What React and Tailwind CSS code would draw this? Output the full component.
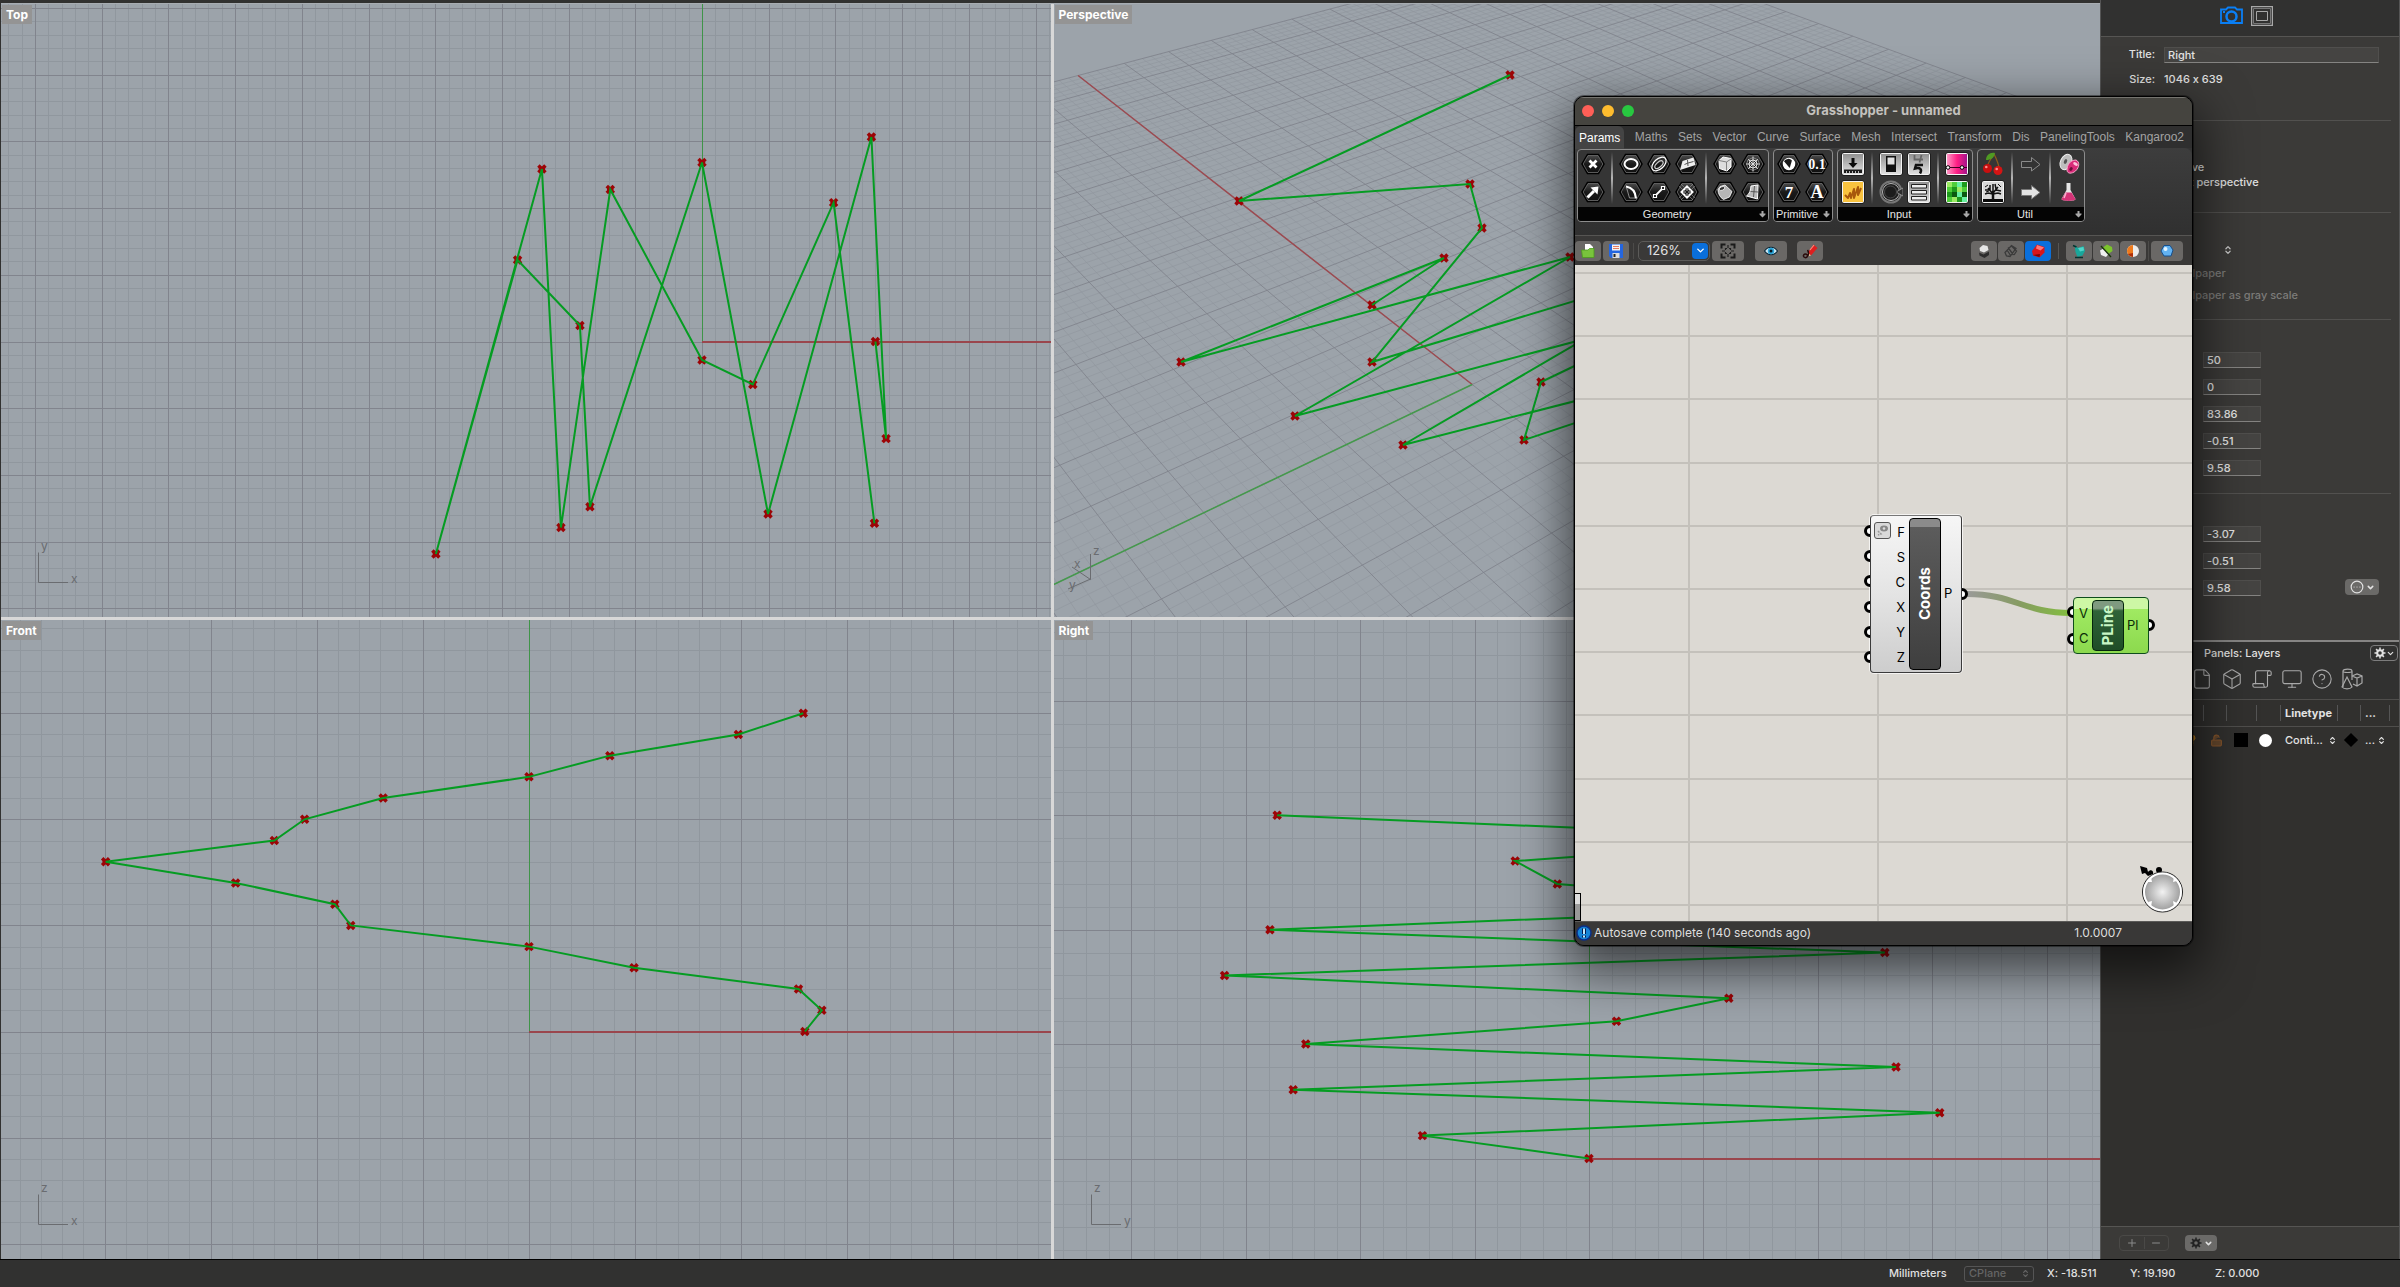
import React from "react";
import {
  File, Box, Scroll, Monitor, CircleHelp, ChevronDown, ChevronsUpDown,
  Plus, Minus, CircleEllipsis, Lightbulb, LockOpen,
} from "lucide-react";

/* ---------- curve data, in major grid units ---------- */
const CURVE = [
  [2.6, 0], [2.76, -1.456], [2.54, 3.066], [0.99, -2.586], [0, 2.684], [-1.68, -2.476],
  [-1.83, 0.24], [-2.765, 1.222], [-3.99, -3.186], [-2.4, 2.586], [-2.115, -2.789],
  [-1.375, 2.279], [0, -0.277], [0.762, -0.645], [1.973, 2.082], [2.585, -2.726],
].map(([x, y], i) => [x, y, i * 0.2]);

const MINOR = "#90979e";
const MAJOR = "#81848d";

function Curve({ points }) {
  return (
    <g>
      {points.map(([x, y], i) => (
        <path
          key={i}
          transform={`translate(${x} ${y})`}
          d="M-3.500 -3.500L3.500 3.500M3.500 -3.500L-3.500 3.500M-1.500 -1H1.500V1H-1.500Z"
          stroke="#9c0406"
          strokeWidth="3.500"
          fill="none"
        />
      ))}
      <polyline
        points={points.map((p) => p.join(",")).join(" ")}
        fill="none"
        stroke="#059c22"
        strokeWidth="2"
      />
    </g>
  );
}

function Viewport({ label, gizmo, children }) {
  return (
    <section className="relative min-w-0 overflow-hidden bg-[#9ca3aa]">
      <svg className="absolute inset-0 h-full w-full">{children}</svg>
      <h2 className="absolute top-px left-px bg-[#949494] px-1 text-[12px] leading-[19px] font-bold text-white">
        {label}
      </h2>
      {gizmo}
    </section>
  );
}

function AxisGizmo({ up, right }) {
  return (
    <svg className="absolute bottom-[29px] left-[32px]" width="54" height="50" stroke="#6a6c70" fill="none">
      <path d="M5.500 14.500V44.500H35" />
      <g fill="#6a6c70" stroke="none" fontSize="12">
        <text x="8" y="12">{up}</text>
        <text x="38" y="45">{right}</text>
      </g>
    </svg>
  );
}

function FlatView({ label, origin, unit, project, gizmo }) {
  const [ox, oy] = origin;
  const steps = Array.from({ length: 141 }, (_, i) => i - 70);
  const W = 14 * unit;
  const path = (list) =>
    list
      .map((i) => {
        const x = Math.round(ox + (i * unit) / 5);
        const y = Math.round(oy + (i * unit) / 5);
        return `M${x} ${oy - W}V${oy + W}M${ox - W} ${y}H${ox + W}`;
      })
      .join("");
  return (
    <Viewport label={label} gizmo={<AxisGizmo {...gizmo} />}>
      <g fill="none" shapeRendering="crispEdges">
        <path d={path(steps.filter((i) => i % 5))} stroke={MINOR} />
        <path d={path(steps.filter((i) => i % 5 === 0))} stroke={MAJOR} />
        <path d={`M${ox} ${oy}V-10`} stroke="#3f9448" />
        <path d={`M${ox} ${oy}H${ox + W}`} stroke="#9a464d" strokeWidth="2" />
      </g>
      <Curve points={CURVE.map((p) => project(p)).map(([u, v]) => [ox + u * unit, oy - v * unit])} />
    </Viewport>
  );
}

const PANE = [1053, 4];

const camera = ([x, y, z = 0]) => {
  const w = 1 + 0.0362 * x - 0.03053 * y - 0.024 * z;
  return [
    (1471.2 + 10.84 * x - 103.8 * y - 38.1 * z) / w - PANE[0],
    (384.5 - 19.34 * x + 16.4 * y - 67.9 * z) / w - PANE[1],
  ];
};

/* screen places of the curve's points in the perspective view; null where the camera gives them */
const PERSPECTIVE_POINTS = [
  [1371, 305], [1443, 258], [1180, 362], [1569, 257], [1294, 416], null, [1540, 382], [1523, 440],
  null, [1402, 445], null, [1371, 362], [1481, 228], [1469, 184], [1238, 201], [1509, 75],
];

function PerspectiveView() {
  const steps = Array.from({ length: 141 }, (_, i) => i - 70);
  const seg = (a, b) => {
    const p = camera(a);
    const q = camera(b);
    return `M${p[0].toFixed(1)} ${p[1].toFixed(1)}L${q[0].toFixed(1)} ${q[1].toFixed(1)}`;
  };
  const lines = (list) =>
    list.map((i) => seg([i / 5, -14], [i / 5, 14]) + seg([-14, i / 5], [14, i / 5])).join("");
  const points = PERSPECTIVE_POINTS.map((p, i) => (p ? [p[0] - PANE[0], p[1] - PANE[1]] : camera(CURVE[i])));
  return (
    <Viewport
      label="Perspective"
      gizmo={
        <svg className="absolute bottom-[22px] left-[10px]" width="54" height="56" stroke="#6a6c70" fill="none">
          <path d="M26.500 15V40.500L8 28M26.500 40L4 50" />
          <g fill="#6a6c70" stroke="none" fontSize="12">
            <text x="29" y="16">z</text>
            <text x="10" y="29">x</text>
            <text x="5" y="50">y</text>
          </g>
        </svg>
      }
    >
      <path d={lines(steps.filter((i) => i % 5))} stroke={MINOR} strokeOpacity="0.65" fill="none" />
      <path d={lines(steps.filter((i) => i % 5 === 0))} stroke={MAJOR} strokeOpacity="0.9" fill="none" />
      <path d={seg([0, 0], [14, 0])} stroke="#9c4a50" strokeWidth="1.500" />
      <path d={seg([0, 0], [0, 14])} stroke="#45994c" strokeWidth="1.500" />
      <Curve points={points} />
    </Viewport>
  );
}

/* ---------- ribbon icons ---------- */
function Hex({ children }) {
  return (
    <svg width="24" height="24" viewBox="0 0 24 24" className="block">
      <path d="M1 12L6.500 2.500H17.500L23 12L17.500 21.500H6.500Z" fill="#0b0b0b" stroke="#000" strokeWidth="1.500" />
      <path d="M2.200 12L7 3.500H17L21.800 12L17 20.500H7Z" fill="url(#hexShade)" stroke="#6f6f6f" strokeWidth="0.800" />
      <g fill="none" stroke="#fff" strokeWidth="1.500">{children}</g>
    </svg>
  );
}

function Plate({ fill = "url(#plateShade)", children }) {
  return (
    <svg width="24" height="24" viewBox="0 0 24 24" className="block">
      <rect x="0.500" y="0.500" width="23" height="23" rx="2" fill="#080808" />
      <rect x="1.500" y="1.500" width="21" height="21" rx="1" fill={fill} stroke="#f4f4f4" />
      {children}
    </svg>
  );
}

const Glyph = ({ size, y, x = 12, children }) => (
  <text x={x} y={y} fontSize={size} textAnchor="middle" fill="#fff" stroke="none" fontWeight="bold" className="font-['Liberation_Serif',serif]">
    {children}
  </text>
);

const I = {
  point: <Hex><path d="M8.500 8.500L15.500 15.500M15.500 8.500L8.500 15.500" strokeWidth="2.800" /></Hex>,
  vector: <Hex><path d="M6.500 17.500L13 11" strokeWidth="3" /><path d="M9.500 7.500L17.500 6.500L16.500 14.500Z" fill="#fff" stroke="none" /></Hex>,
  circle: <Hex><ellipse cx="12" cy="12" rx="6.500" ry="5" strokeWidth="2" /></Hex>,
  arc: <Hex><path d="M7 6.500C13 7.500 16.500 11.500 17 18.500" strokeWidth="2.200" /><path d="M7.500 7.500L10.500 18L16 18" strokeWidth="0.700" stroke="#bbb" /></Hex>,
  curve: <Hex><ellipse cx="12" cy="12" rx="8.500" ry="5" transform="rotate(-42 12 12)" strokeWidth="1.300" /><ellipse cx="11.500" cy="12.500" rx="5" ry="2.500" transform="rotate(-42 12 12)" strokeWidth="1.200" stroke="#ccc" /></Hex>,
  line: <Hex><path d="M8 16L16 8" strokeWidth="1.800" /><path d="M6.500 14.500h3v3h-3zM14.500 6.500h3v3h-3z" fill="#111" strokeWidth="1.200" /></Hex>,
  plane: <Hex><path d="M7.500 9L18.500 5.500L20.500 13L5 18Z" fill="#eee" stroke="none" /><path d="M9.500 12.500L13 11M12.500 8L13 14M13 11L18.500 9.500" stroke="#555" strokeWidth="1" /></Hex>,
  rect: <Hex><path d="M12 6.500L17.500 12L12 17.500L6.500 12Z" strokeWidth="2" /><path d="M6 4L20 18M18 4L4 18M4 6L18 20M20 6L6 20" stroke="#999" strokeWidth="0.600" /></Hex>,
  box: <Hex><path d="M6 8.500L10 5L18 6.500V15L14 19L6.500 16.500Z" fill="#ddd" stroke="#fff" strokeWidth="1" /><path d="M6 8.500L13.500 10V18.500M13.500 10L18 7" stroke="#777" strokeWidth="0.900" /></Hex>,
  brep: <Hex><path d="M7 6.500L12 5L19 11.500L16.500 17L10.500 19.500C7 17.500 5 13.500 5 9.500Z" fill="#b5b5b5" strokeWidth="0.800" /><ellipse cx="9" cy="8.500" rx="2.800" ry="1.700" fill="#333" stroke="#eee" strokeWidth="0.800" transform="rotate(-25 9 8.500)" /></Hex>,
  mesh: <Hex><circle cx="12" cy="12" r="4" strokeWidth="0.900" /><path d="M12 4.500V19.500M5 12H19M7 7L17 17M17 7L7 17" strokeWidth="1" stroke="#ddd" /><path d="M7 8L12 5.500L17 8L18.500 12L17 16L12 18.500L7 16L5.500 12Z" strokeWidth="0.700" stroke="#aaa" /></Hex>,
  surface: <Hex><path d="M10 6L17 5L16.500 19L5.500 16C9 13.500 9.500 10 10 6Z" fill="#bbb" strokeWidth="1" /><path d="M13.500 6L12.500 17M9.500 11.500L17 12" stroke="#444" strokeWidth="0.800" /></Hex>,
  bool: <Hex><circle cx="12" cy="12" r="5.500" fill="#fff" stroke="#fff" /><path d="M8 12L15.500 7.500A5 5 0 0 1 15 15.500Z" transform="rotate(-100 12 12)" fill="#1a1a1a" stroke="none" /></Hex>,
  number: <Hex><Glyph size="14" y="17">0.1</Glyph></Hex>,
  int: <Hex><Glyph size="17" y="18">7</Glyph></Hex>,
  text: <Hex><Glyph size="18" y="18">A</Glyph></Hex>,
  slider: <Plate><path d="M10.500 6h3v5h3L12 16L7.500 11h3z" fill="#0a0a0a" /><path d="M3 17.500H21V21H3Z" fill="#1c1c1c" /><path d="M5.500 21v-2M8.500 21v-2M11.500 21v-2M14.500 21v-2M17.500 21v-2" stroke="#bbb" /></Plate>,
  graph: <Plate fill="#f9c33f"><path d="M4 15L7 18L9 13L10 18L13 9L13 18L17 7L17 15L20 8" fill="none" stroke="#a8580c" strokeWidth="2" strokeLinejoin="round" /></Plate>,
  toggle: <Plate><rect x="7" y="4" width="10" height="16" fill="#111" /><rect x="8.500" y="5.500" width="7" height="7" fill="#e0e0e0" /></Plate>,
  knob: (
    <svg width="24" height="24" viewBox="0 0 24 24" className="block">
      <circle cx="12" cy="12" r="10.500" fill="#1d1d1d" stroke="#777" strokeWidth="2" />
      <circle cx="12" cy="12" r="8.500" fill="none" stroke="#b5b5b5" />
      <path d="M24 8L17 12L24 16Z" fill="#2c2c2c" stroke="#999" strokeWidth="0.800" />
      <circle cx="11.500" cy="12" r="6" fill="#1c1c1c" stroke="#4a4a4a" />
    </svg>
  ),
  digits: <Plate><path d="M7.500 3V7.500H16M14.500 3L12.500 10.500" fill="none" stroke="#666" strokeWidth="1.800" /><path d="M16 13H9L8 16.500C13 15 15.500 17.500 13 21.500" fill="none" stroke="#111" strokeWidth="2.500" /></Plate>,
  list: <Plate><path d="M4.500 4.500h15v3.500h-15zM4.500 10.500h15v3.500h-15zM4.500 16.500h15v3.500h-15z" fill="#eee" stroke="#222" /></Plate>,
  gradient: <Plate fill="url(#pinkShade)"><path d="M2 15.500H22" stroke="#400020" /><circle cx="3" cy="15.500" r="1.800" fill="#fff" stroke="#000" /><circle cx="17" cy="15.500" r="1.800" fill="#fff" stroke="#000" /></Plate>,
  swatch: (
    <Plate fill="#4fce3a">
      <path d="M2 2h5v5h-5zM12 7h5v5h-5zM7 17h5v5h-5z" fill="#9bea62" />
      <path d="M7 7h5v5h-5zM17 2h5v5h-5zM2 12h5v5h-5zM12 17h5v5h-5z" fill="#1e9a1c" />
      <path d="M7 12h5v5h-5zM17 12h5v5h-5z" fill="#0c5a10" />
      <path d="M12 2h5v5h-5zM17 17h5v5h-5zM12 12h5v5h-5z" fill="#66f0a0" />
    </Plate>
  ),
  cherry: (
    <svg width="24" height="24" viewBox="0 0 24 24" className="block">
      <path d="M13 2C9 8 7 11 6 15M13 2C16 8 17.500 11 18 16" stroke="#8c5a1c" strokeWidth="1.300" fill="none" />
      <path d="M14 1C9 0 5 3 5 8C10 8 13 6 14 1Z" fill="#4f9a22" />
      <circle cx="6.500" cy="16.500" r="4.500" fill="#c90f0f" /><circle cx="17" cy="18.500" r="4.500" fill="#d51414" />
      <circle cx="5.300" cy="15" r="1.300" fill="#ff8d8d" /><circle cx="15.700" cy="17" r="1.300" fill="#ff8d8d" />
    </svg>
  ),
  tree: <Plate fill="#d9d9d9"><rect x="2" y="19" width="20" height="3" fill="#0a0a0a" /><path d="M12 20V11" stroke="#111" strokeWidth="2.500" /><path d="M12 14L7 8M12 13L17 7M12 11V4M9 10L4 10M15 10L20 11M9 10L9 5M15 9L14 4M7 13L4 14M17 13L20 14M12 14L17 13M12 14L7 13" stroke="#111" strokeWidth="1.500" fill="none" /><path d="M4 7L7 5M17 4L20 7M5 12L8 11" stroke="#111" strokeWidth="1" /></Plate>,
  arrowDark: <svg width="24" height="24" viewBox="0 0 24 24" className="block"><path d="M2.500 9.500H12.500V5.500L21 12.500L12.500 19V15.500H2.500Z" fill="#333" stroke="#8a8a8a" /></svg>,
  arrowLight: <svg width="24" height="24" viewBox="0 0 24 24" className="block"><path d="M2.500 9.500H12.500V5.500L21 12.500L12.500 19V15.500H2.500Z" fill="#e3e3e3" stroke="#777" /></svg>,
  pills: (
    <svg width="24" height="24" viewBox="0 0 24 24" className="block">
      <ellipse cx="9" cy="10" rx="5.500" ry="8" transform="rotate(25 9 10)" fill="#bdbdbd" stroke="#eee" />
      <ellipse cx="8.500" cy="9.500" rx="1.500" ry="2.500" transform="rotate(25 8.500 9.500)" fill="#555" />
      <path d="M10 18C10 13 13 8 19 8C23 10 22.500 15 18.500 19C15 22 10 22 10 18Z" fill="#d92a78" stroke="#f7a8c9" />
      <ellipse cx="14" cy="17" rx="1.500" ry="2" transform="rotate(40 14 17)" fill="#6a1038" />
      <ellipse cx="18.500" cy="12" rx="2.500" ry="1.500" transform="rotate(30 18.500 12)" fill="#ffc1da" />
    </svg>
  ),
  flask: (
    <svg width="24" height="24" viewBox="0 0 24 24" className="block">
      <path d="M9.500 3H13.500V10L18.500 19C18.500 21.500 5 21.500 4.500 19L9.500 10Z" fill="#e6e6e6" />
      <path d="M8.500 12.500H14.500L18.500 19C18.500 21.500 5 21.500 4.500 19Z" fill="#d33377" />
      <path d="M9 13L7 18" stroke="#f9b3d0" strokeWidth="1.500" />
    </svg>
  ),
};

const RIBBON = [
  { name: "Geometry", cols: [["point", "vector"], null, ["circle", "arc"], ["curve", "line"], ["plane", "rect"], null, ["box", "brep"], ["mesh", "surface"]] },
  { name: "Primitive", cols: [["bool", "int"], ["number", "text"]] },
  { name: "Input", cols: [["slider", "graph"], null, ["toggle", "knob"], ["digits", "list"], null, ["gradient", "swatch"]] },
  { name: "Util", cols: [["cherry", "tree"], null, ["arrowDark", "arrowLight"], null, ["pills", "flask"]] },
];

function RibbonGroup({ name, cols }) {
  let gap = false;
  return (
    <section className="overflow-hidden rounded border border-[#8c8c8c] bg-[#353535]">
      <div className="flex px-[3px] pt-[2px] pb-[3px]">
        {cols.map((col, i) => {
          if (!col) {
            gap = false;
            return <span key={i} className="mx-[6px] w-[2px] bg-linear-to-b from-transparent via-[#b5b5b5] to-transparent" />;
          }
          const cls = gap ? "ml-1 flex flex-col gap-1" : "flex flex-col gap-1";
          gap = true;
          return (
            <div key={i} className={cls}>
              {col.map((k) => <button key={k} aria-label={k} className="block size-6">{I[k]}</button>)}
            </div>
          );
        })}
      </div>
      <div className="relative flex h-[14px] items-center justify-center bg-[#040404] pr-3 text-[11px] leading-none text-[#e4e4e4]">
        <span>{name}</span>
        <svg className="absolute right-[2px] bottom-[3px]" width="7" height="8" viewBox="0 0 7 8"><path d="M2.500 1H4.500V3.500H6.500V4.500L3.500 7.500L0.500 4.500V3.500H2.500Z" fill="#a8a8a8" /></svg>
      </div>
    </section>
  );
}

/* ---------- toolbar ---------- */
function Tool({ label, wide, active, children }) {
  return (
    <button
      aria-label={label}
      className={
        (wide ? "w-8 " : "w-[26px] ") +
        (active ? "bg-[#0a6fdb] " : "bg-[#6a6866] ") +
        "flex h-5 shrink-0 items-center justify-center rounded-[4px]"
      }
    >
      <svg width="16" height="16" viewBox="0 0 16 16">{children}</svg>
    </button>
  );
}

function Toolbar() {
  return (
    <div className="flex h-[30px] items-center border-t border-[#565553] bg-[#393837]">
      <Tool label="Open"><path d="M5 1H10L13 4V9H5Z" fill="#fff" /><path d="M1.500 7H8L9.500 5.500H14V14.500H2.500Z" fill="#79c43c" stroke="#4d9a1e" strokeWidth="0.800" /></Tool>
      <span className="w-[2px]" />
      <Tool label="Save"><path d="M1 1H15V15H3L1 13Z" fill="#2466e0" /><rect x="4" y="1.500" width="8" height="6" fill="#f2f2f2" /><rect x="4.500" y="10" width="7" height="5" fill="#ddd" /><rect x="5.500" y="11" width="2" height="3" fill="#222" /><path d="M5 3.500h6M5 5.500h6" stroke="#e05a3c" strokeWidth="0.800" /></Tool>
      <span className="mx-1 h-4 w-px bg-[#4c4b49]" />
      <div className="flex h-5 w-[72px] shrink-0 items-center rounded-[5px] border border-[#5c5b59] bg-[#3a3938]">
        <input aria-label="Zoom" defaultValue="126%" className="min-w-0 flex-1 bg-transparent pl-2 text-[13px] text-[#e2e2e2]" />
        <button aria-label="Zoom levels" className="mr-px flex size-4 items-center justify-center rounded-[4px] bg-[#0a6fdb] text-white"><ChevronDown size={11} strokeWidth={3} /></button>
      </div>
      <span className="w-[2px]" />
      <Tool label="Zoom extents" wide><path d="M1.500 5.500V1.500H5.500M10.500 1.500H14.500V5.500M14.500 10.500V14.500H10.500M5.500 14.500H1.500V10.500" fill="none" stroke="#1a1a1a" strokeWidth="2" /><path d="M8 2V5M8 11V14M2 8H5M11 8H14M5.500 7V5.500H7M9 5.500H10.500V7M10.500 9V10.500H9M7 10.500H5.500V9" fill="none" stroke="#1f1f1f" strokeWidth="1.200" /></Tool>
      <span className="w-[11px]" />
      <Tool label="Named views" wide><path d="M1.500 8C5 3 11 3 14.500 8C11 13 5 13 1.500 8Z" fill="#cfeaf5" stroke="#0b2636" strokeWidth="1.200" /><circle cx="8" cy="8" r="3.200" fill="#2aa7dc" /><circle cx="8" cy="8" r="1.500" fill="#06151c" /></Tool>
      <span className="w-[10px]" />
      <Tool label="Sketch"><path d="M6 9.500L11.500 1.500L15.500 5L9 12.500Z" fill="#de1f1f" /><path d="M8 7L12 2" stroke="#ff8a7a" strokeWidth="1.200" /><path d="M6 9.500L9 12.500L5 13.500Z" fill="#f0c090" /><path d="M6 13C4 9 0 12 2 14C5 16.500 8 11 5.500 7" fill="none" stroke="#2a0c0c" strokeWidth="1.500" /></Tool>
      <span className="flex-1" />
      <div className="flex gap-px">
        <Tool label="No preview"><path d="M3.500 5L7 2L11.500 3L12.500 7L8 9.500L4 8Z" fill="#e6e6e6" /><path d="M3 9.500L7.500 11.500L13 8.500V12L8.500 15L3.500 12.500Z" fill="#2d2d2d" /></Tool>
        <Tool label="Wireframe preview"><path d="M2 9.500L8.500 2.500L13 5.500L7 13.500L3.500 13ZM5 4.500L10.500 12M4 7L8 13M8.500 3L13.500 8L11 12" fill="none" stroke="#3a3a3a" strokeWidth="1.300" /></Tool>
        <Tool label="Shaded preview" active><path d="M2 8L7 1.500L14.500 4V9.500L9.500 14.500L3 12.500Z" fill="#d8151b" /><path d="M7 2L14 4.500L10.500 7.500L6 5.500Z" fill="#ff7676" /><path d="M3 12L9.500 14L10 11Z" fill="#7c0508" /></Tool>
      </div>
      <span className="mx-[7px] h-4 w-px bg-[#565553]" />
      <div className="flex gap-px">
        <Tool label="Preview selected"><path d="M3.500 2L7 5L12.500 3L14 8L11.500 12.500L6.500 14L4.500 9Z" fill="#19a79b" /><path d="M7 5L12.500 4L13 7.500L9 8.500Z" fill="#50d6ca" /><path d="M2 2.500L5.500 4M4 14.500H12" stroke="#06332f" strokeWidth="1.500" /></Tool>
        <Tool label="Preview filter"><path d="M5 4.500L9 1.500L14 4L14.500 8L11 10.500Z" fill="#7cc52c" /><path d="M2 7.500L5.500 5.500L10.500 11L8 14L3 12Z" fill="#f0f0f0" /><path d="M3 3L13 14" stroke="#173307" strokeWidth="1.300" /></Tool>
        <Tool label="Document preview"><circle cx="8" cy="8" r="6" fill="#ececec" /><path d="M8 2A6 6 0 0 0 8 14Z" fill="#ee7a1c" /><path d="M3 11A6 6 0 0 0 8 14V10Z" fill="#ad2f0a" /></Tool>
      </div>
      <span className="mx-[2px] h-5 w-px bg-[#4c4b49]" />
      <Tool label="Preview quality" wide><path d="M5 2.500H11L14 7L12 13H5L2 8Z" fill="#62b2f2" stroke="#174f8c" /><circle cx="6.500" cy="6" r="2" fill="#e3f4ff" /></Tool>
      <span className="w-[9px]" />
    </div>
  );
}

/* ---------- canvas nodes ---------- */
const Grip = () => <span className="block size-3 rounded-full border-[3px] border-black bg-white" />;

function CoordsNode() {
  return (
    <div className="absolute top-[250px] left-[295px] flex h-[158px] w-[92px] rounded-[4px] ring-1 ring-white/70">
      <div className="absolute inset-y-0 -left-[6px] flex flex-col justify-around py-[3px]">
        {[0, 1, 2, 3, 4, 5].map((i) => <Grip key={i} />)}
      </div>
      <div className="absolute top-[73px] -right-[6px]"><Grip /></div>
      <div className="relative flex w-full rounded-[4px] border border-[#3b3b3b] border-t-[#777] bg-linear-to-b from-[#f6f6f6] via-[#e4e4e4] to-[#cdcdcd] text-[13px] text-black">
        <button aria-label="Coords options" className="absolute top-[6px] left-[3px] flex size-[17px] items-center justify-center rounded-[3px] border border-[#555] bg-[#d9d9d9]">
          <svg width="13" height="13" viewBox="0 0 13 13"><ellipse cx="8" cy="4.500" rx="4" ry="3" fill="#888" /><circle cx="8" cy="4.500" r="1.300" fill="#ddd" /><path d="M2 7L5 10L2 11" stroke="#999" strokeDasharray="2 1" fill="none" strokeWidth="1.500" /></svg>
        </button>
        <ul className="flex w-[38px] flex-col justify-around py-[3px] pr-1 text-right leading-4">
          {["F", "S", "C", "X", "Y", "Z"].map((k) => <li key={k}>{k}</li>)}
        </ul>
        <div className="my-[2px] flex w-8 items-center justify-center rounded-[4px] border border-black bg-linear-to-b from-[#8b8b8b] from-5% via-[#5c5c5c] via-5% to-[#3f3f3f]">
          <span className="rotate-180 text-[15px] font-bold text-white [writing-mode:vertical-rl]">Coords</span>
        </div>
        <span className="self-center pl-[3px]">P</span>
      </div>
    </div>
  );
}

function PLineNode() {
  return (
    <div className="absolute top-[332px] left-[498px] flex h-[57px] w-[76px]">
      <div className="absolute inset-y-0 -left-[6px] flex flex-col justify-around py-[2px]"><Grip /><Grip /></div>
      <div className="absolute top-[22px] -right-[6px]"><Grip /></div>
      <div className="relative flex w-full rounded-[4px] border border-[#0e4d1c] bg-linear-to-b from-[#cdf7a5] from-20% via-[#a0ea62] via-20% to-[#8cd94e] text-[13px] text-[#0a2a08]">
        <ul className="flex w-[18px] flex-col justify-around py-[2px] pl-[5px] leading-4"><li>V</li><li>C</li></ul>
        <div className="my-[2px] flex w-8 items-center justify-center rounded-[4px] border border-[#04250c] bg-linear-to-b from-[#7f9a80] from-15% via-[#2f6338] via-20% to-[#1f4d27]">
          <span className="rotate-180 text-[15px] font-bold text-[#c8f7c4] [writing-mode:vertical-rl]">PLine</span>
        </div>
        <span className="self-center pl-[3px]">Pl</span>
      </div>
    </div>
  );
}

const TABS = ["Params", "Maths", "Sets", "Vector", "Curve", "Surface", "Mesh", "Intersect", "Transform", "Dis", "PanelingTools", "Kangaroo2"];

function GrasshopperWindow() {
  return (
    <section className="absolute top-[96px] left-[1574px] w-[619px] overflow-hidden rounded-[10px] border border-black bg-[#343434] shadow-[0_18px_50px_8px_rgba(0,0,0,0.6)] ring-1 ring-black/40">
      <header className="relative flex h-7 items-center justify-center border-t border-[#75746f] bg-[#45443f] pb-[2px]">
        <div className="absolute left-[7px] flex gap-2">
          <button aria-label="Close" className="size-3 rounded-full bg-[#ff5f57]" />
          <button aria-label="Minimize" className="size-3 rounded-full bg-[#febc2e]" />
          <button aria-label="Maximize" className="size-3 rounded-full bg-[#28c840]" />
        </div>
        <h1 className="text-[13px] font-bold text-[#c4c2be]">Grasshopper - unnamed</h1>
      </header>
      <nav className="flex h-[23px] justify-between border-t border-black bg-[#2f2f2f] pr-2 font-['Liberation_Sans',sans-serif] text-[12px] leading-[20px] text-[#a3a3a3]">
        {TABS.map((t, i) => (
          <button key={t} className={i ? "" : "-mb-px rounded-t-md bg-[#444] px-1 leading-[18px] text-white"}>{t}</button>
        ))}
      </nav>
      <div className="flex h-[87px] items-start gap-1 rounded-tr-lg bg-linear-to-b from-[#3d3d3d] to-[#303030] pt-px pl-[2px] font-['Liberation_Sans',sans-serif]">
        {RIBBON.map((g) => <RibbonGroup key={g.name} {...g} />)}
      </div>
      <Toolbar />
      <div className="relative h-[656px] overflow-hidden bg-[#dcd9d3]">
        <svg className="absolute inset-0 h-full w-full" fill="none">
          <path d={[114, 303, 492].map((x) => `M${x} 0V656`).join("")} stroke="#c4c1bb" strokeWidth="2" />
          <path d={Array.from({ length: 11 }, (_, i) => `M0 ${Math.round(8 + i * 63.2)}H617`).join("")} stroke="#c4c1bb" strokeWidth="2" />
          <path d="M392 329C440 329 448 348 496 348" stroke="url(#wire)" strokeWidth="6" />
        </svg>
        <CoordsNode />
        <PLineNode />
        <span className="absolute bottom-0 -left-px h-7 w-[7px] border border-black bg-linear-to-b from-[#ddd] from-40% to-[#999] to-40%" />
        <svg className="absolute right-[8px] bottom-[7px]" width="44" height="50" viewBox="0 0 44 50">
          <path d="M0 2L7 4L8 8C10 5 14 6 13 10L8 12L5 9L2 10Z" fill="#000" /><circle cx="19" cy="6" r="3" fill="#000" />
          <circle cx="22.500" cy="28" r="20" fill="url(#ball)" stroke="#222" strokeWidth="1" />
          <circle cx="22.500" cy="28" r="18.500" fill="none" stroke="#fff" strokeWidth="2" />
          <path d="M7 18L12 18L11 13ZM37 17L33 18L34 13ZM8 38L12 37L11 43ZM37 39L33 37L34 43Z" fill="#fff" />
        </svg>
      </div>
      <footer className="flex h-6 items-center border-t border-[#5b5a58] bg-[#393837] pb-px text-[12px] text-[#dedede]">
        <svg width="16" height="16" viewBox="0 0 16 16" className="ml-px"><circle cx="8" cy="8" r="7" fill="#1585d8" stroke="#0b2f86" strokeWidth="1.500" /><path d="M8 3.500V9M8 10.500V12.500" stroke="#04184a" strokeWidth="4" /><path d="M8 3.500V9M8 10.500V12.500" stroke="#bdeaff" strokeWidth="2" /></svg>
        <span className="pl-[2px]">Autosave complete (140 seconds ago)</span>
        <span className="ml-auto pr-[70px]">1.0.0007</span>
      </footer>
    </section>
  );
}

/* ---------- side panel ---------- */
function Gear({ className }) {
  return (
    <svg width="12" height="12" viewBox="0 0 12 12" fill="none" stroke="currentColor" className={className}>
      <circle cx="6" cy="6" r="2.800" strokeWidth="2" />
      <path d="M6 0.500V3M6 9V11.500M0.500 6H3M9 6H11.500M2.100 2.100L3.900 3.900M8.100 8.100L9.900 9.900M9.900 2.100L8.100 3.900M3.900 8.100L2.100 9.900" strokeWidth="1.500" />
    </svg>
  );
}

function Field({ label, value, className }) {
  return (
    <input
      aria-label={label}
      defaultValue={value}
      className={"block h-4 border border-[#504f4d] border-b-[#858482] bg-[#454442] px-[3px] text-[11px] leading-none text-[#e4e4e4] " + className}
    />
  );
}

const Rule = () => <hr className="mr-[8px] ml-3 border-[#52514f]" />;

function SidePanel() {
  return (
    <aside className="flex w-[300px] shrink-0 flex-col border-x border-[#555] bg-[#3b3a38] text-[11px] font-medium text-[#e2e2e2]">
      <div className="flex h-[37px] items-start justify-end gap-2 border-b border-[#565553] bg-[#313130] pt-[6px] pr-[126px]">
        <button aria-label="Viewport properties">
          <svg width="23" height="19" viewBox="0 0 23 19" fill="none" stroke="#0a7ff5" strokeWidth="1.800"><path d="M1 3.500H6L8 1.500H15L17 3.500H22V17H1Z" /><circle cx="11.500" cy="10.500" r="5" strokeWidth="2.500" /><path d="M3 6H5" /></svg>
        </button>
        <button aria-label="Frame properties">
          <svg width="22" height="20" viewBox="0 0 22 20" fill="none" stroke="#a8a8a8"><path d="M.5.5H21.500V19.500H.5Z" strokeWidth="1.500" /><path d="M2.500 2.500H19.500V17.500H2.500Z" stroke="#777" /><path d="M5.500 5.500H16.500V14.500H5.500Z" /></svg>
        </button>
      </div>
      <div className="grid h-[83px] grid-cols-[54px_1fr] gap-x-[9px] gap-y-2 pt-[10px] pr-5 [grid-auto-rows:16px]">
        <label htmlFor="vp-title" className="text-right leading-[15px]">Title:</label>
        <input id="vp-title" defaultValue="Right" className="h-4 w-full border border-[#504f4d] border-b-[#858482] bg-[#454442] px-[3px] leading-none" />
        <span className="text-right leading-4">Size:</span>
        <span className="leading-4">1046 x 639</span>
      </div>
      <Rule />
      <div className="flex h-[91px] flex-col pt-[39px] pl-[41px] leading-[15px]">
        <span>Perspective</span>
        <span>Two point perspective</span>
      </div>
      <Rule />
      <div className="relative flex h-[106px] flex-col gap-[6px] pt-[52px] pl-[41px] leading-4 text-[#7d7c7a]">
        <ChevronsUpDown size={10} strokeWidth={3} className="absolute top-[32px] left-[122px] text-[#c8c8c8]" />
        <span>Show wallpaper</span>
        <span>Show wallpaper as gray scale</span>
      </div>
      <Rule />
      <div className="flex h-[173px] flex-col gap-[11px] pt-[32px] pl-[102px]">
        {["50", "0", "83.86", "-0.51", "9.58"].map((v, i) => <Field key={i} label={"Camera value " + (i + 1)} value={v} className="w-[58px]" />)}
      </div>
      <Rule />
      <div className="relative flex h-[146px] flex-col gap-[11px] pt-[32px] pl-[102px]">
        {["-3.07", "-0.51", "9.58"].map((v, i) => <Field key={i} label={"Target value " + (i + 1)} value={v} className="w-[58px]" />)}
        <button aria-label="More" className="absolute top-[85px] right-5 flex h-4 w-[34px] items-center justify-center gap-[2px] rounded-[4px] bg-[#6b6a68]">
          <CircleEllipsis size={14} strokeWidth={2} /><ChevronDown size={9} strokeWidth={4} />
        </button>
      </div>
      <div className="flex h-6 items-center justify-between border-t-2 border-[#868584] bg-[#313130] pr-px pl-[103px]">
        <h2>Panels: Layers</h2>
        <button aria-label="Panel options" className="flex h-4 w-7 items-center justify-center rounded-[4px] border border-[#7c7c7c]">
          <Gear /><ChevronDown size={9} strokeWidth={3} />
        </button>
      </div>
      <div className="flex h-[36px] items-center gap-[8px] border-b border-[#4f4e4c] bg-[#313130] pb-[5px] pl-[90px] text-[#a9a9a9]">
        <File size={22} strokeWidth={1.2} /><Box size={22} strokeWidth={1.2} /><Scroll size={22} strokeWidth={1.2} className="-scale-x-100" /><Monitor size={22} strokeWidth={1.2} /><CircleHelp size={22} strokeWidth={1.2} />
        <svg width="22" height="22" viewBox="0 0 22 22" fill="none" stroke="#a9a9a9" strokeWidth="1.200"><path d="M2 19L2 3C2 .5 11 .5 11 3V12M2 3C2 5 11 5 11 3" /><path d="M1 19L6 9L11 19C9 21.500 3 21.500 1 19Z" /><path d="M11 8L16 6L21 8V15L16 18L12 16M11 8L16 10L21 8M16 10V18" /></svg>
      </div>
      <div className="flex h-[27px] items-center border-b border-[#4f4e4c] bg-[#31302e] pl-[102px] text-[11px] font-bold">
        <span className="h-4 w-[23px] border-l border-[#555]" /><span className="h-4 w-[30px] border-l border-[#555]" /><span className="h-4 w-6 border-l border-[#555]" />
        <span className="w-[57px] border-l border-[#555] pl-1 leading-4">Linetype</span>
        <span className="h-4 w-[23px] border-l border-[#555]" /><span className="w-[29px] border-l border-[#555] pl-1 leading-4">...</span><span className="h-4 border-l border-[#555]" />
      </div>
      <div className="flex min-h-0 flex-1 items-start bg-[#31302e] pt-[5px]">
        <div className="flex h-4 w-full items-center pl-[85px]">
          <Lightbulb size={12} className="fill-[#b47a1c] text-[#b47a1c]" />
          <LockOpen size={13} strokeWidth={2} className="ml-[12px] fill-[#86552c]/60 text-[#86552c]" />
          <span className="ml-[11px] size-[14px] bg-black" />
          <span className="ml-[11px] size-[13px] rounded-full bg-white" />
          <span className="ml-[13px] w-[42px]">Conti...</span>
          <ChevronsUpDown size={9} strokeWidth={3} className="ml-px" />
          <span className="ml-[9px] size-[10px] rotate-45 bg-black" />
          <span className="ml-[9px] w-3">...</span>
          <ChevronsUpDown size={9} strokeWidth={3} />
        </div>
      </div>
      <div className="flex h-[33px] items-center gap-4 border-t border-[#565553] pl-[18px]">
        <div className="flex h-4 w-[50px] items-center rounded-[4px] border border-[#4a4947] text-[#8a8a8a]">
          <button aria-label="Add layer" className="flex flex-1 justify-center border-r border-[#4a4947]"><Plus size={12} /></button>
          <button aria-label="Remove layer" className="flex flex-1 justify-center"><Minus size={12} /></button>
        </div>
        <button aria-label="Layer options" className="flex h-4 w-8 items-center justify-center gap-[2px] rounded-[4px] bg-[#6b6a68]">
          <Gear className="text-[#222]" /><ChevronDown size={9} strokeWidth={4} />
        </button>
      </div>
    </aside>
  );
}

export default function App() {
  return (
    <div className="relative flex h-screen flex-col overflow-hidden bg-[#313130] font-['Inter',sans-serif] [font-feature-settings:'calt'_0]">
      <svg width="0" height="0" className="absolute">
        <defs>
          <linearGradient id="hexShade" x1="0" y1="0" x2="0" y2="1"><stop offset="0" stopColor="#4a4a4a" /><stop offset="0.500" stopColor="#1a1a1a" /><stop offset="1" stopColor="#111" /></linearGradient>
          <linearGradient id="plateShade" x1="0" y1="0" x2="0" y2="1"><stop offset="0" stopColor="#8f8f8f" /><stop offset="1" stopColor="#e2e2e2" /></linearGradient>
          <linearGradient id="pinkShade" x1="0" y1="0" x2="1" y2="0"><stop offset="0" stopColor="#ff9cc8" /><stop offset="0.500" stopColor="#ff1f84" /><stop offset="1" stopColor="#a0138c" /></linearGradient>
          <linearGradient id="wire" gradientUnits="userSpaceOnUse" x1="392" y1="0" x2="496" y2="0"><stop offset="0" stopColor="#9a9a98" /><stop offset="0.500" stopColor="#869b62" /><stop offset="1" stopColor="#83bf3e" /></linearGradient>
          <radialGradient id="ball"><stop offset="0" stopColor="#f2f2f2" /><stop offset="1" stopColor="#969696" /></radialGradient>
        </defs>
      </svg>
      <div className="flex min-h-0 flex-1">
        <main className="mt-[3px] ml-px grid min-w-0 flex-1 grid-cols-[1049fr_1046fr] grid-rows-[613fr_639fr] gap-[3px] border-t border-[#a8adb2] bg-[#d8d8d8]">
          <FlatView label="Top" origin={[701, 337.5]} unit={66.7} project={([x, y]) => [x, y]} gizmo={{ up: "y", right: "x" }} />
          <PerspectiveView />
          <FlatView label="Front" origin={[528, 411.5]} unit={106.1} project={([x, , z]) => [x, z]} gizmo={{ up: "z", right: "x" }} />
          <FlatView label="Right" origin={[535, 538.5]} unit={114.4} project={([, y, z]) => [y, z]} gizmo={{ up: "z", right: "y" }} />
        </main>
        <SidePanel />
      </div>
      <footer className="flex h-7 shrink-0 items-center justify-end border-t border-black bg-[#313130] pr-[107px] text-[11px] font-medium text-[#e0e0e0]">
        <span className="w-[75px]">Millimeters</span>
        <div className="relative flex w-[83px] items-center">
          <select aria-label="Construction plane" className="h-4 w-[70px] appearance-none rounded-[3px] border border-[#555] px-1 text-[11px] leading-none text-[#656565]"><option>CPlane</option></select>
          <ChevronsUpDown size={9} strokeWidth={3} className="absolute right-[17px] text-[#656565]" />
        </div>
        <span className="w-[83px]">X: -18.511</span>
        <span className="w-[85px]">Y: 19.190</span>
        <span className="w-[78px]">Z: 0.000</span>
      </footer>
      <GrasshopperWindow />
    </div>
  );
}
